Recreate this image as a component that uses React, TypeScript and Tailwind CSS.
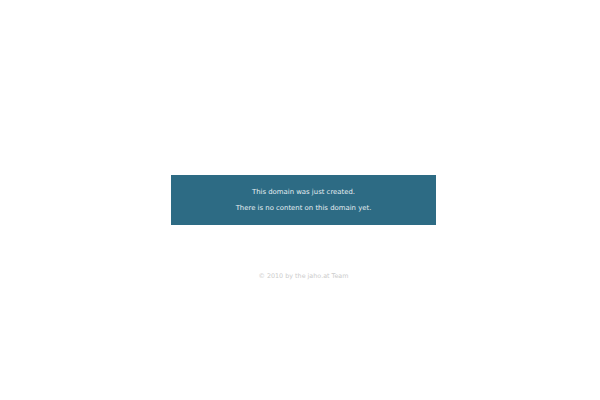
export default function App() {
  return (
    <div className="w-[600px] h-[400px] bg-white flex flex-col items-center pt-[175px] pl-[7px]" style={{ fontFamily: '"DejaVu Sans", sans-serif' }}>
      <div className="w-[265px] h-[50px] bg-[#2d6b84] flex flex-col items-center justify-center gap-[6px] text-[#e6eef2] text-[6.9px] leading-[10px]">
        <p>This domain was just created.</p>
        <p>There is no content on this domain yet.</p>
      </div>
      <p className="mt-[46px] text-[6.4px] leading-[10px] text-[#cccccc]">© 2010 by the jaho.at Team</p>
    </div>
  );
}
